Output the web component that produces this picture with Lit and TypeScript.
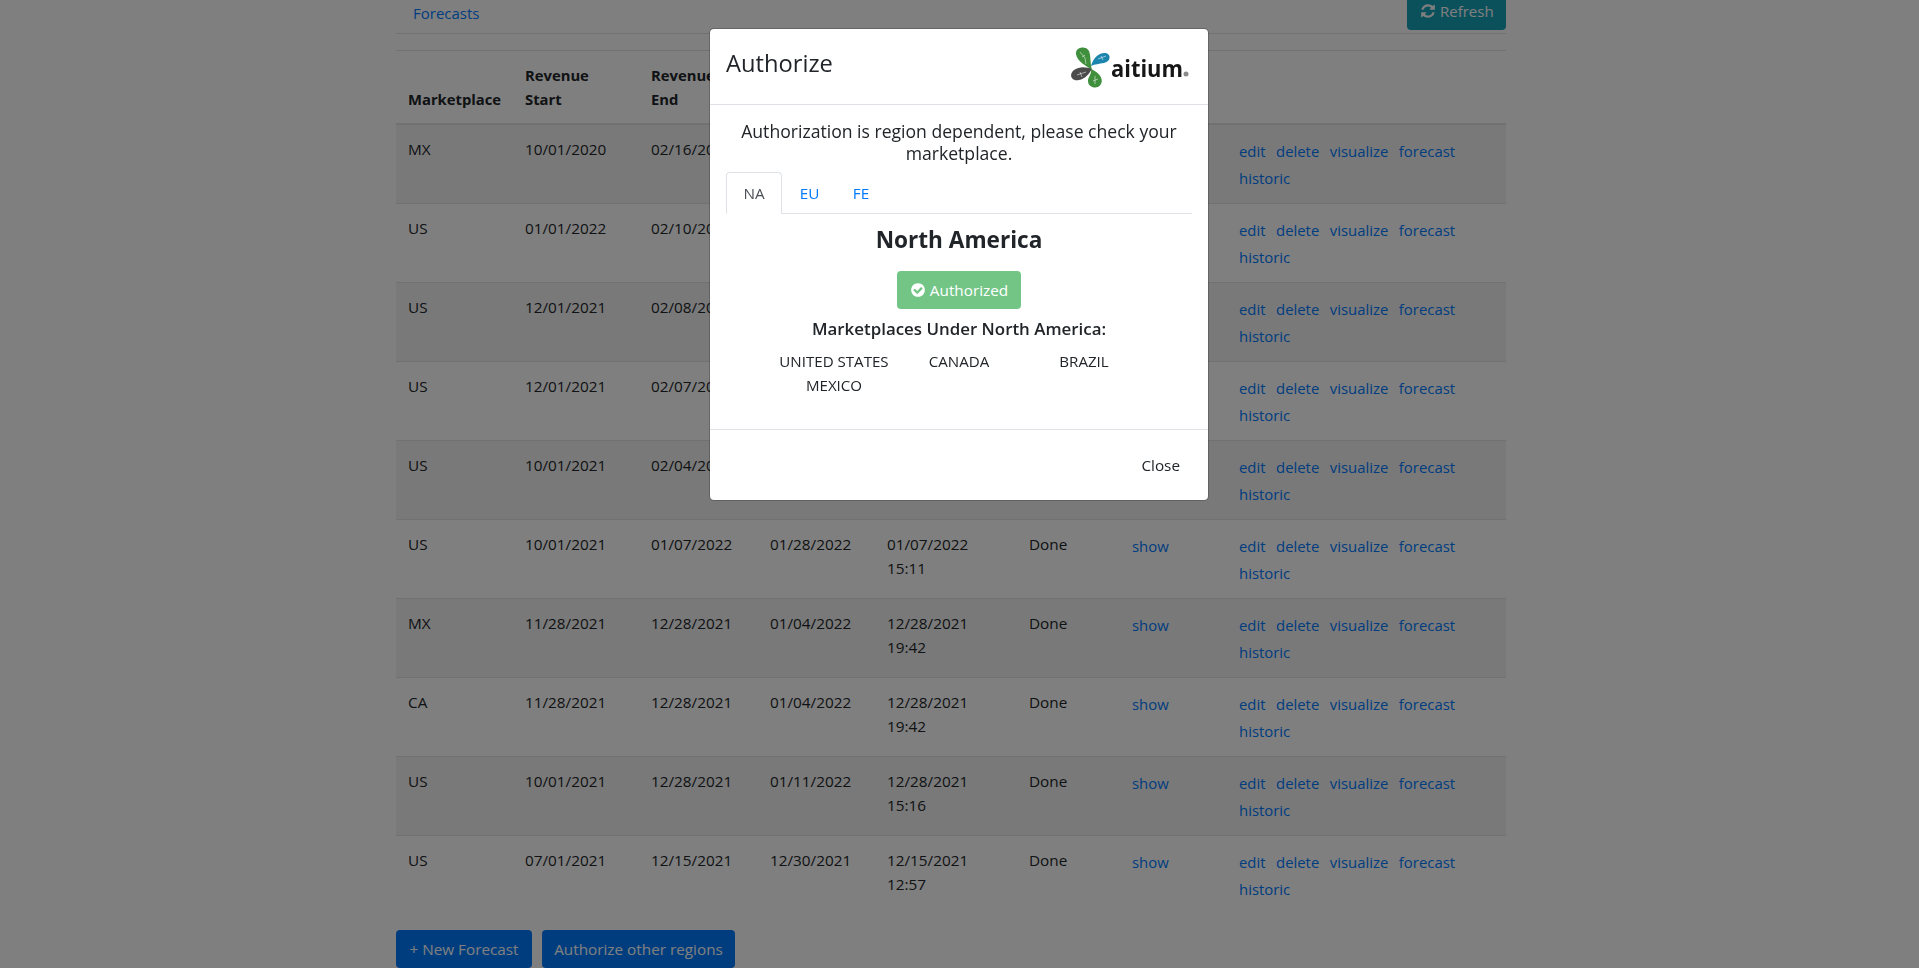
import { LitElement, html, css } from "lit";
import { customElement } from "lit/decorators.js";

interface Row {
  market: string;
  start: string;
  end: string;
  fcEnd?: string;
  created?: string;
  status?: string;
}

// rows 1-5 sit behind the modal from the 4th column on
const ROWS: Row[] = [
  { market: "MX", start: "10/01/2020", end: "02/16/2022" },
  { market: "US", start: "01/01/2022", end: "02/10/2022" },
  { market: "US", start: "12/01/2021", end: "02/08/2022" },
  { market: "US", start: "12/01/2021", end: "02/07/2022" },
  { market: "US", start: "10/01/2021", end: "02/04/2022" },
  { market: "US", start: "10/01/2021", end: "01/07/2022", fcEnd: "01/28/2022", created: "01/07/2022 15:11", status: "Done" },
  { market: "MX", start: "11/28/2021", end: "12/28/2021", fcEnd: "01/04/2022", created: "12/28/2021 19:42", status: "Done" },
  { market: "CA", start: "11/28/2021", end: "12/28/2021", fcEnd: "01/04/2022", created: "12/28/2021 19:42", status: "Done" },
  { market: "US", start: "10/01/2021", end: "12/28/2021", fcEnd: "01/11/2022", created: "12/28/2021 15:16", status: "Done" },
  { market: "US", start: "07/01/2021", end: "12/15/2021", fcEnd: "12/30/2021", created: "12/15/2021 12:57", status: "Done" },
];

const COLS = [117, 126, 119, 117, 142, 103, 107, 279];
const ACTIONS = ["edit", "delete", "visualize", "forecast", "historic"];
const MARKETPLACES = ["UNITED STATES", "CANADA", "BRAZIL", "MEXICO"];

const REFRESH =
  "M1639 1056q0 5-1 7-64 268-268 434.5t-478 166.5q-146 0-282.5-55t-243.5-157l-129 129q-19 19-45 19t-45-19-19-45v-448q0-26 19-45t45-19h448q26 0 45 19t19 45-19 45l-137 137q71 66 161 102t187 36q134 0 250-65t186-179q11-17 53-117 8-23 30-23h192q13 0 22.5 9.5t9.5 22.5zm25-800v448q0 26-19 45t-45 19h-448q-26 0-45-19t-19-45 19-45l138-138q-148-137-349-137-134 0-250 65t-186 179q-11 17-53 117-8 23-30 23h-199q-13 0-22.5-9.5t-9.5-22.5v-7q65-268 270-434.5t480-166.5q146 0 284 55.5t245 156.5l130-129q19-19 45-19t45 19 19 45z";
const CHECK =
  "M1412 734q0-28-18-46l-91-90q-19-19-45-19t-45 19l-408 407-226-226q-19-19-45-19t-45 19l-91 90q-18 18-18 46 0 27 18 45l362 362q19 19 45 19 27 0 46-19l543-543q18-18 18-45zm252 162q0 209-103 385.5t-279.5 279.5-385.5 103-385.5-103-279.5-279.5-103-385.5 103-385.5 279.5-279.5 385.5-103 385.5 103 279.5 279.5 103 385.5z";

@customElement("app-root")
export class AppRoot extends LitElement {
  static styles = css`
    :host {
      display: block;
      height: 968px;
      overflow: hidden;
      background: #fff;
      color: #212529;
      font-family: "Open Sans", "Noto Sans", sans-serif;
      font-size: 15.3px;
      line-height: 24px;
    }
    a {
      color: #007bff;
      text-decoration: none;
    }
    .container {
      width: 1110px;
      margin-left: 396px;
    }
    .topbar {
      display: flex;
      justify-content: space-between;
      align-items: flex-start;
      height: 41px;
      margin-top: -8px;
      margin-bottom: 16px;
      border-bottom: 1px solid #dee2e6;
      box-sizing: content-box;
    }
    .topbar a {
      margin: 9px 0 0 17px;
      font-size: 15px;
    }
    .btn {
      display: inline-flex;
      align-items: center;
      height: 38px;
      box-sizing: border-box;
      padding: 0 12px;
      border: 0;
      border-radius: 4px;
      color: #fff;
      font: inherit;
    }
    .btn svg {
      width: 16px;
      height: 16px;
      margin-right: 4px;
      fill: currentColor;
    }
    .refresh {
      width: 99px;
      padding-left: 13px;
      background: #17a2b8;
      font-size: 15px;
    }
    table {
      width: 1110px;
      table-layout: fixed;
      border-collapse: separate;
      border-spacing: 0;
      border-top: 1px solid #dee2e6;
    }
    th,
    td {
      padding: 12px;
      text-align: left;
      vertical-align: top;
      overflow: hidden;
    }
    th {
      vertical-align: bottom;
      font-size: 14.8px;
      font-weight: 700;
      border-bottom: 2px solid #dee2e6;
    }
    td {
      height: 54px;
      box-sizing: content-box;
      border-bottom: 1px solid #dee2e6;
    }
    tbody tr:last-child td {
      border-bottom: 0;
    }
    tbody tr:nth-child(odd) td {
      background: #f2f2f2;
    }
    td.link-cell a {
      display: inline-block;
      margin: 2px 6.5px 1px 0;
      font-size: 14.9px;
    }
    .footer {
      display: flex;
      gap: 10px;
      margin-top: 16px;
    }
    .footer .btn {
      justify-content: center;
      padding: 0;
      background: #007bff;
    }
    .footer .new {
      width: 136px;
    }
    .footer .auth {
      width: 193px;
    }
    .backdrop {
      position: fixed;
      inset: 0;
      background: rgba(0, 0, 0, 0.5);
    }
    .modal {
      position: fixed;
      top: 28px;
      left: 709px;
      width: 500px;
      box-sizing: border-box;
      height: 473px;
      display: flex;
      flex-direction: column;
      background: #fff;
      border: 1px solid rgba(0, 0, 0, 0.2);
      background-clip: padding-box;
      border-radius: 5px;
    }
    .modal-header {
      display: flex;
      justify-content: space-between;
      align-items: center;
      height: 76px;
      box-sizing: border-box;
      padding: 0 18px 0 16px;
      border-bottom: 1px solid #dee2e6;
    }
    .modal-title {
      margin: 0 0 7px;
      font-size: 23.7px;
      font-weight: 400;
      line-height: 30px;
    }
    .logo {
      display: block;
      width: 120px;
      height: 42px;
    }
    .logo text {
      font-family: "Open Sans", sans-serif;
    }
    .veins {
      fill: none;
      stroke: #fff;
      stroke-width: 0.7;
      opacity: 0.75;
    }
    .modal-body {
      flex: 1;
      padding: 15px 16px 16px;
      text-align: center;
    }
    .lead {
      margin: 0 0 7px;
      font-size: 17.6px;
      font-weight: 500;
      line-height: 22.4px;
    }
    .tabs {
      display: flex;
      height: 42px;
      box-sizing: border-box;
      border-bottom: 1px solid #dee2e6;
    }
    .tab {
      height: 42px;
      box-sizing: border-box;
      padding: 8px 16.5px;
      border: 1px solid transparent;
      border-radius: 4px 4px 0 0;
    }
    .tab:last-child {
      margin-left: -1.5px;
    }
    .tab.active {
      color: #495057;
      background: #fff;
      border-color: #dee2e6 #dee2e6 #fff;
    }
    .region {
      margin: 11px 0 17px;
      font-size: 22.6px;
      font-weight: 700;
      line-height: 29px;
    }
    .status {
      display: inline-flex;
      width: 124px;
      justify-content: center;
      background: #28a745;
      opacity: 0.65;
      padding: 0;
    }
    .status svg {
      margin-right: 4px;
    }
    .under {
      margin: 8px 0 8px;
      font-size: 16.9px;
      font-weight: 600;
      line-height: 24px;
    }
    .markets {
      display: grid;
      grid-template-columns: repeat(3, 125px);
      justify-content: center;
      font-size: 15.1px;
    }
    .modal-footer {
      display: flex;
      justify-content: flex-end;
      height: 71px;
      box-sizing: border-box;
      padding: 16px;
      border-top: 1px solid #dee2e6;
    }
    .close {
      color: #212529;
      background: transparent;
    }
  `;

  private renderLogo() {
    return html`
      <svg class="logo" viewBox="0 0 120 42" aria-label="aitium">
        <path fill="#3f8f3c" d="M22 24C17 20 7 16 6 8C5 1 16 -1 19 5C21 10 20 17 22 24Z" />
        <path fill="#1c85ad" d="M21 20C23 12 29 6 36 7C42 9 40 16 34 17C29 18 25 18 21 20Z" />
        <path fill="#4b4b4b" d="M22 23C16 21 10 20 4 24C-2 29 2 36 9 34C15 33 19 28 22 23Z" />
        <path fill="#3f8f3c" d="M21 23C28 26 34 32 31 38C28 44 18 42 18 35C18 31 22 28 21 23Z" />
        <path class="veins" d="M10 6L15 12L16 18M12 11L15 9M28 13L36 10M31 10L33 14M7 29L16 26M10 26L12 31M23 35L28 33M25 30L25 38" />
        <text x="41" y="31" font-size="24" font-weight="700" textLength="72" lengthAdjust="spacingAndGlyphs" fill="#161616">aitium</text>
        <circle cx="116" cy="28" r="2.5" fill="#8a8a8a" />
      </svg>
    `;
  }

  render() {
    return html`
      <div class="container">
        <div class="topbar">
          <a href="#">Forecasts</a>
          <button class="btn refresh">
            <svg viewBox="0 0 1792 1792"><path d="${REFRESH}" /></svg>Refresh
          </button>
        </div>
        <table>
          <colgroup>
            ${COLS.map((w) => html`<col style="width:${w}px" />`)}
          </colgroup>
          <thead>
            <tr>
              <th>Marketplace</th>
              <th>Revenue Start</th>
              <th>Revenue End</th>
              <th></th>
              <th></th>
              <th></th>
              <th></th>
              <th></th>
            </tr>
          </thead>
          <tbody>
            ${ROWS.map(
              (r) => html`
                <tr>
                  <td>${r.market}</td>
                  <td>${r.start}</td>
                  <td>${r.end}</td>
                  <td>${r.fcEnd ?? ""}</td>
                  <td>${r.created ?? ""}</td>
                  <td>${r.status ?? ""}</td>
                  <td class="link-cell"><a href="#">show</a></td>
                  <td class="link-cell">
                    ${ACTIONS.map((a) => html`<a href="#">${a}</a> `)}
                  </td>
                </tr>
              `,
            )}
          </tbody>
        </table>
        <div class="footer">
          <button class="btn new">+ New Forecast</button>
          <button class="btn auth">Authorize other regions</button>
        </div>
      </div>

      <div class="backdrop"></div>
      <div class="modal">
        <div class="modal-header">
          <h5 class="modal-title">Authorize</h5>
          ${this.renderLogo()}
        </div>
        <div class="modal-body">
          <p class="lead">Authorization is region dependent, please check your marketplace.</p>
          <div class="tabs">
            <a class="tab active" href="#">NA</a>
            <a class="tab" href="#">EU</a>
            <a class="tab" href="#">FE</a>
          </div>
          <h4 class="region">North America</h4>
          <button class="btn status">
            <svg viewBox="0 0 1792 1792"><path d="${CHECK}" /></svg>Authorized
          </button>
          <div class="under">Marketplaces Under North America:</div>
          <div class="markets">
            ${MARKETPLACES.map((m) => html`<span>${m}</span>`)}
          </div>
        </div>
        <div class="modal-footer">
          <button class="btn close">Close</button>
        </div>
      </div>
    `;
  }
}
